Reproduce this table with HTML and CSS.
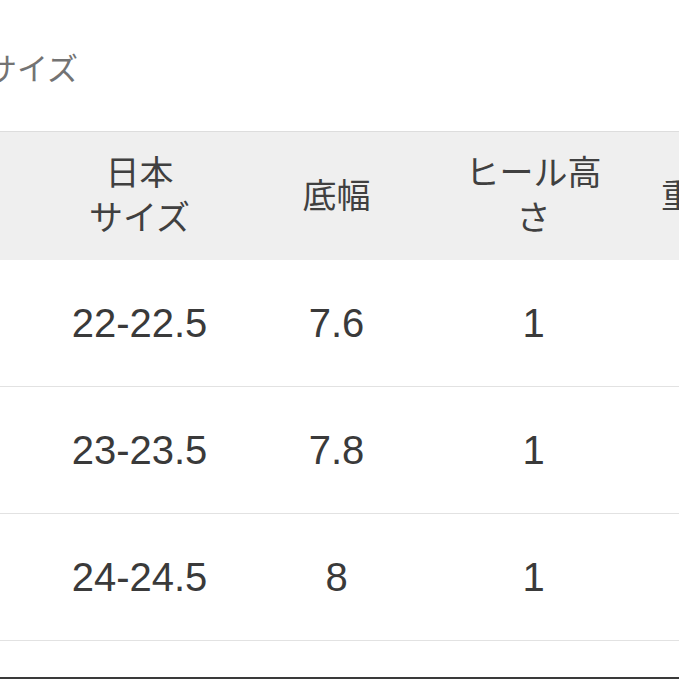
FILE: index.html
```html
<!DOCTYPE html>
<html lang="ja">
<head>
<meta charset="utf-8">
<title>サイズ</title>
<link rel="stylesheet" href="styles.css">
</head>
<body>
<div class="page">
  <div class="title">サイズ</div>
  <table class="size-table">
    <thead>
      <tr>
        <th>EUサイ<br>ズ</th>
        <th>日本<br>サイズ</th>
        <th>底幅</th>
        <th>ヒール高<br>さ</th>
        <th class="weight">重量（g）</th>
      </tr>
    </thead>
    <tbody>
      <tr><td>35</td><td>22-22.5</td><td>7.6</td><td>1</td><td>180</td></tr>
      <tr><td>36</td><td>23-23.5</td><td>7.8</td><td>1</td><td>190</td></tr>
      <tr><td>37</td><td>24-24.5</td><td>8</td><td>1</td><td>200</td></tr>
      <tr class="cut"><td></td><td></td><td></td><td></td><td></td></tr>
    </tbody>
  </table>
</div>
</body>
</html>
```

FILE: styles.css
```css
html, body {
  margin: 0;
  padding: 0;
  background: #ffffff;
}

.page {
  width: 679px;
  height: 679px;
  overflow: hidden;
  font-family: "Liberation Sans", "Noto Sans CJK JP", sans-serif;
}

.title {
  margin: 50px 0 41px -14px;
  font-size: 31px;
  line-height: 40px;
  color: #737373;
  white-space: nowrap;
}

.size-table {
  table-layout: fixed;
  width: 985px;
  margin-left: -156px;
  border-collapse: collapse;
  border-spacing: 0;
}

.size-table th {
  height: 128px;
  padding: 0;
  background: #efefef;
  border-top: 1px solid #dddddd;
  font-weight: normal;
  font-size: 34px;
  line-height: 45px;
  color: #404040;
  text-align: center;
  vertical-align: middle;
  white-space: nowrap;
}

.size-table th.weight {
  padding-left: 16px;
}

.size-table td {
  height: 126px;
  padding: 0;
  border-bottom: 1px solid #e2e2e2;
  font-size: 40px;
  line-height: 46px;
  color: #3a3a3a;
  text-align: center;
  vertical-align: middle;
}

.size-table tr.cut td {
  height: 36px;
  border-bottom: 2px solid #3a3a3a;
}
```
